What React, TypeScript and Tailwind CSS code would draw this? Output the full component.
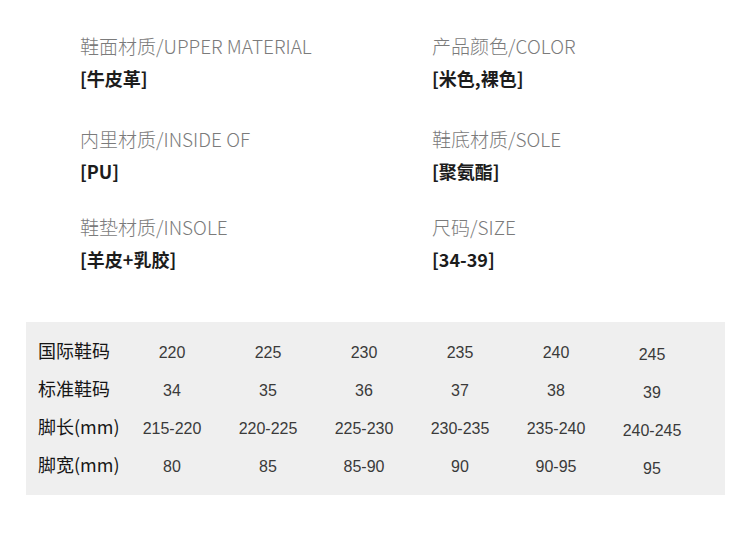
const SPECS = [
  [
    { label: "鞋面材质/UPPER MATERIAL", value: "[牛皮革]" },
    { label: "产品颜色/COLOR", value: "[米色,裸色]" },
  ],
  [
    { label: "内里材质/INSIDE OF", value: "[PU]" },
    { label: "鞋底材质/SOLE", value: "[聚氨酯]" },
  ],
  [
    { label: "鞋垫材质/INSOLE", value: "[羊皮+乳胶]" },
    { label: "尺码/SIZE", value: "[34-39]" },
  ],
];

const SIZE_ROWS = [
  { name: "国际鞋码", cells: ["220", "225", "230", "235", "240", "245"] },
  { name: "标准鞋码", cells: ["34", "35", "36", "37", "38", "39"] },
  {
    name: "脚长(mm)",
    cells: ["215-220", "220-225", "225-230", "230-235", "235-240", "240-245"],
  },
  { name: "脚宽(mm)", cells: ["80", "85", "85-90", "90", "90-95", "95"] },
];

export default function App() {
  return (
    <div className="h-[553px] w-[750px] overflow-hidden bg-white font-['Noto_Sans_CJK_SC',sans-serif]">
      <div className="flex flex-col pl-[80px] pt-[34px]">
        {SPECS.map((row, i) => (
          <div
            key={i}
            className={[
              "grid grid-cols-[352px_1fr]",
              i === 1 ? "mt-[37px]" : i === 2 ? "mt-[32px]" : "",
            ].join(" ")}
          >
            {row.map((s) => (
              <div key={s.label} className="flex flex-col">
                <span className="text-[19px] font-light leading-[24px] text-[#7b7b7b]">
                  {s.label}
                </span>
                <span className="mt-[8px] text-[18px] font-bold leading-[24px] text-[#1c1c1c]">
                  {s.value}
                </span>
              </div>
            ))}
          </div>
        ))}
      </div>

      <div className="ml-[26px] mt-[51px] h-[173px] w-[699px] bg-[#efefef] pl-[12px] pt-[9px]">
        {SIZE_ROWS.map((r) => (
          <div key={r.name} className="flex h-[38px] items-center">
            <span className="w-[86px] text-[18px] leading-none text-[#161616]">
              {r.name}
            </span>
            {r.cells.map((c, j) => (
              <span
                key={j}
                className={[
                  "flex h-full w-[96px] items-center justify-center font-['Liberation_Sans',sans-serif] text-[16px] text-[#3a3a3a]",
                  j === 5 ? "pt-[9px]" : "pt-[5px]",
                ].join(" ")}
              >
                {c}
              </span>
            ))}
          </div>
        ))}
      </div>
    </div>
  );
}
